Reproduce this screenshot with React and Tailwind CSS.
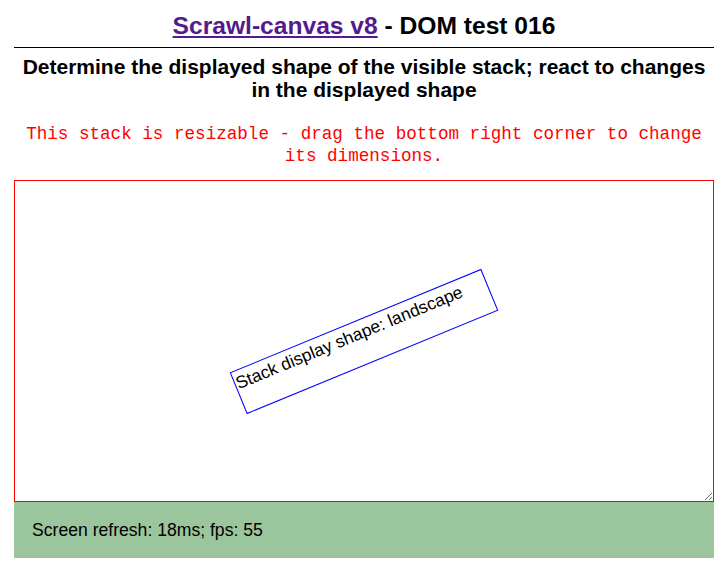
export default function App() {
  return (
    <div className="px-[14px] bg-white text-black" style={{ fontFamily: '"Liberation Sans", Arial, sans-serif' }}>
      <h1 className="pt-[12px] text-center text-[24.6px] font-bold leading-[28px]">
        <a href="#" className="text-[#551a8b] underline">Scrawl-canvas v8</a> - DOM test 016
      </h1>
      <hr className="mt-[7px] border-0 border-t border-black" />
      <h2 className="mt-[7px] text-center text-[21px] font-bold leading-[23px]">
        Determine the displayed shape of the visible stack; react to changes in the displayed shape
      </h2>
      <p
        className="mt-[22px] text-center text-[17.6px] leading-[22px] text-[#ff0000]"
        style={{ fontFamily: '"Liberation Mono", "Courier New", monospace' }}
      >
        This stack is resizable - drag the bottom right corner to change its dimensions.
      </p>
      <div className="mt-[13px] relative h-[322px] border border-[#ff0000] resize overflow-hidden flex items-center justify-center">
        <div className="w-[272px] h-[45px] shrink-0 border border-[#0000ff] rotate-[-22.4deg] text-[17.4px] leading-[20px] pl-[1px] pt-[2px] whitespace-nowrap">
          Stack display shape: landscape
        </div>
      </div>
      <div className="h-[56px] bg-[#9bc59c] flex items-center pl-[18px] text-[17.6px]">
        Screen refresh: 18ms; fps: 55
      </div>
    </div>
  );
}
